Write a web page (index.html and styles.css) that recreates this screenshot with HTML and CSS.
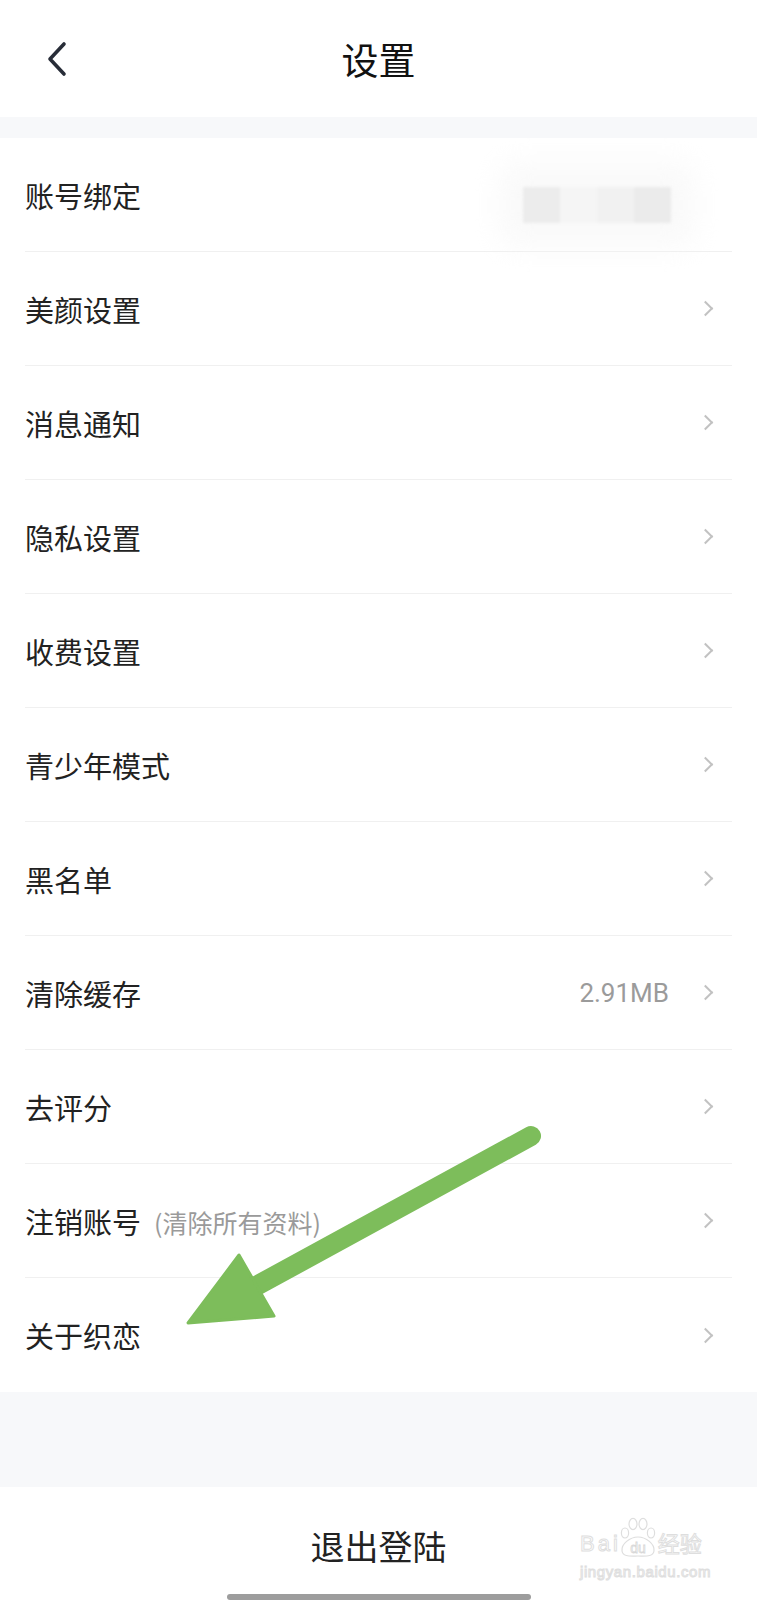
FILE: index.html
```html
<!DOCTYPE html>
<html lang="zh-CN">
<head>
    <meta charset="utf-8">
    <title>设置</title>
    <link rel="stylesheet" href="styles.css">
</head>
<body>
<div class="page">
    <header class="topbar">
        <a class="back" href="#">
            <svg width="22" height="36" viewBox="0 0 22 36">
                <path d="M18 3 L4 18 L18 33" fill="none" stroke="#282d38" stroke-width="3.6" stroke-linecap="round" stroke-linejoin="round"/>
            </svg>
        </a>
        <h1 class="title">设置</h1>
        <span></span>
    </header>

    <div class="gap"></div>

    <ul class="menu">
        <li class="row">
            <span class="label">账号绑定</span>
            <span class="masked">
                <i class="m1"></i><i class="m2"></i><i class="m3"></i><i class="m4"></i>
            </span>
        </li>
        <li class="row"><span class="label">美颜设置</span><span class="arrow-r"></span></li>
        <li class="row"><span class="label">消息通知</span><span class="arrow-r"></span></li>
        <li class="row"><span class="label">隐私设置</span><span class="arrow-r"></span></li>
        <li class="row"><span class="label">收费设置</span><span class="arrow-r"></span></li>
        <li class="row"><span class="label">青少年模式</span><span class="arrow-r"></span></li>
        <li class="row"><span class="label">黑名单</span><span class="arrow-r"></span></li>
        <li class="row">
            <span class="label">清除缓存</span>
            <span class="value">2.91MB</span>
            <span class="arrow-r"></span>
        </li>
        <li class="row"><span class="label">去评分</span><span class="arrow-r"></span></li>
        <li class="row">
            <span class="label">注销账号</span>
            <span class="note">(清除所有资料)</span>
            <span class="arrow-r"></span>
        </li>
        <li class="row last"><span class="label">关于织恋</span><span class="arrow-r"></span></li>
    </ul>

    <div class="gap gap-lg"></div>

    <div class="logout">
        <span>退出登陆</span>
        <div class="home-bar"></div>
    </div>

    <!-- green annotation arrow on top of the screenshot -->
    <svg class="pointer" width="757" height="1600" viewBox="0 0 757 1600">
        <line x1="531" y1="1136" x2="258" y2="1285" stroke="#7dbd5b" stroke-width="20" stroke-linecap="round"/>
        <polygon points="188,1323 239,1255 274,1316" fill="#7dbd5b" stroke="#7dbd5b" stroke-width="3" stroke-linejoin="round"/>
    </svg>

    <!-- baidu jingyan watermark -->
    <div class="watermark">
        <div class="wm-logo">
            <span class="wm-bai">Bai</span>
            <svg class="wm-paw" width="38" height="42" viewBox="0 0 38 42">
                <g fill="#fff" stroke="#dedede" stroke-width="1.2">
                    <ellipse cx="6" cy="17" rx="3.6" ry="5"/>
                    <ellipse cx="14" cy="8" rx="4" ry="5.6"/>
                    <ellipse cx="24" cy="8" rx="4" ry="5.6"/>
                    <ellipse cx="32" cy="17" rx="3.6" ry="5"/>
                    <path d="M19 21 C27 21 36 28 35 35 C34 41 27 40 19 40 C11 40 4 41 3 35 C2 28 11 21 19 21 Z"/>
                </g>
                <text x="19" y="37" text-anchor="middle" font-size="14" font-family="Liberation Sans, sans-serif" fill="#fff" stroke="#d8d8d8" stroke-width="0.8">du</text>
            </svg>
            <span class="wm-cn">经验</span>
        </div>
        <div class="wm-url">jingyan.baidu.com</div>
    </div>
</div>
</body>
</html>
```

FILE: styles.css
```css
* {
    margin: 0;
    padding: 0;
    box-sizing: border-box;
}

body {
    font-family: "Noto Sans CJK SC", "Noto Sans", sans-serif;
    background-color: #fff;
    color: #222;
}

.page {
    position: relative;
    width: 757px;
    height: 1600px;
    overflow: hidden;
    background-color: #fff;
}

/* top bar */
.topbar {
    height: 117px;
    display: grid;
    grid-template-columns: 1fr auto 1fr;
    align-items: center;
}
.back {
    display: flex;
    align-items: center;
    padding-left: 46px;
}
.title {
    font-size: 37px;
    font-weight: 400;
    color: #111;
    line-height: 40px;
}

.gap {
    height: 21px;
    background-color: #f7f8fa;
}
.gap-lg {
    height: 95px;
}

/* list */
.menu {
    list-style: none;
}
.row {
    display: flex;
    align-items: center;
    height: 114px;
    margin: 0 25px;
    border-bottom: 1px solid #f0f0f0;
}
.row.last {
    border-bottom: none;
}
.label {
    font-size: 29px;
    color: #222;
    line-height: 36px;
}
.note {
    font-size: 25px;
    color: #9a9a9a;
    margin-left: 13px;
    margin-top: 2px;
}
.value {
    margin-left: auto;
    margin-right: 31px;
    font-family: Roboto, "Noto Sans", sans-serif;
    font-size: 26px;
    color: #9b9b9b;
}
.arrow-r {
    margin-left: auto;
    margin-right: 21px;
    width: 11px;
    height: 11px;
    border-top: 2px solid #c2c2c2;
    border-right: 2px solid #c2c2c2;
    transform: rotate(45deg);
}
.value + .arrow-r {
    margin-left: 0;
}

/* blurred account info */
.masked {
    margin-left: auto;
    margin-right: 61px;
    margin-top: 20px;
    display: flex;
    height: 36px;
    filter: blur(1.5px);
    box-shadow: 0 0 30px 22px rgba(245, 245, 245, 0.6);
}
.masked i {
    display: block;
    width: 37px;
    height: 36px;
}
.m1 { background-color: #ececec; }
.m2 { background-color: #f5f5f5; }
.m3 { background-color: #f1f1f1; }
.m4 { background-color: #ebebeb; }

/* logout */
.logout {
    height: 113px;
    padding-top: 39px;
    text-align: center;
    font-size: 34px;
    line-height: 40px;
    color: #222;
}
.home-bar {
    width: 304px;
    height: 6px;
    margin: 28px auto 0;
    border-radius: 3px;
    background-color: #9d9d9d;
}

.pointer {
    position: absolute;
    top: 0;
    left: 0;
    pointer-events: none;
}

.watermark {
    position: absolute;
    left: 580px;
    top: 1514px;
    width: 138px;
    pointer-events: none;
    font-family: "Liberation Sans", "Noto Sans CJK SC", sans-serif;
    color: #fff;
    -webkit-text-stroke: 1px #dedede;
}
.wm-logo {
    display: flex;
    align-items: flex-end;
    height: 44px;
}
.wm-bai {
    font-size: 22px;
    line-height: 22px;
    letter-spacing: 3px;
    padding-bottom: 3px;
}
.wm-paw {
    display: block;
    margin-left: -2px;
}
.wm-cn {
    font-size: 22px;
    line-height: 24px;
    padding-bottom: 1px;
    margin-left: 1px;
}
.wm-url {
    margin-top: 5px;
    font-size: 15px;
    line-height: 18px;
    letter-spacing: 0.6px;
}
```
